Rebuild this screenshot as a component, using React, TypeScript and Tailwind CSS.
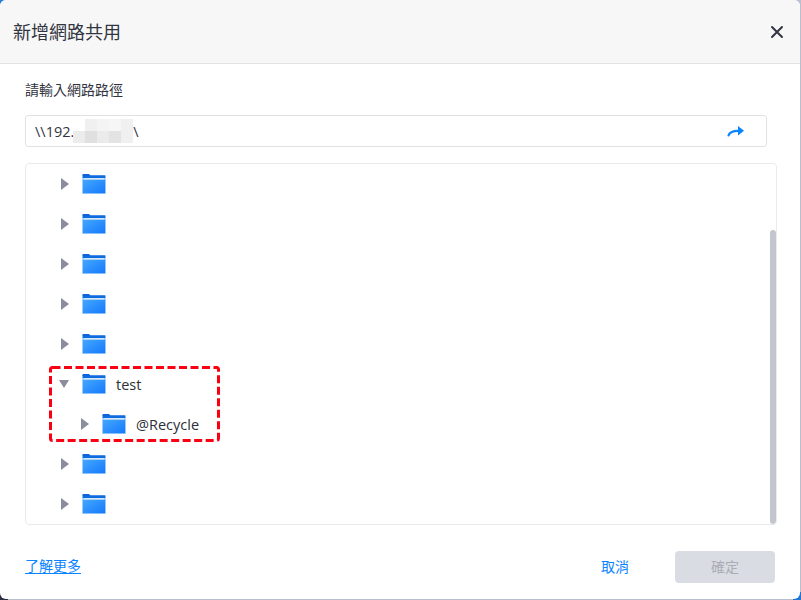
import React from 'react';

const FONT = { fontFamily: '"Open Sans", "Noto Sans CJK TC", sans-serif' };

function Folder() {
  return (
    <svg width="24" height="20" viewBox="0 0 24 20" className="shrink-0">
      <defs>
        <linearGradient id="folderFill" x1="0" y1="0" x2="1" y2="1">
          <stop offset="0" stopColor="#45a8ff" />
          <stop offset="1" stopColor="#1479fb" />
        </linearGradient>
      </defs>
      <path d="M0.5 2V0.8C0.5 0.3 0.8 0 1.2 0H7L8.5 1.5H23V2H0.5Z" fill="#0a63d8" />
      <rect x="0.5" y="1.5" width="23" height="3" fill="#0f6be0" />
      <rect x="0" y="5" width="24" height="15" fill="#b5dafc" />
      <rect x="0.8" y="5.5" width="22.4" height="13.8" fill="url(#folderFill)" />
      <rect x="1.5" y="4" width="21" height="1.5" fill="#d5e8fb" />
    </svg>
  );
}

function Row({ name, open, depth }: { name?: string; open?: boolean; depth?: boolean }) {
  return (
    <div className={`flex h-10 items-center ${depth ? 'pl-[55px]' : 'pl-[35px]'}`}>
      <div className="flex w-[21px] shrink-0 items-center">
        {open ? (
          <div className="h-0 w-0 -translate-x-[2px] border-x-[5.5px] border-t-[8px] border-x-transparent border-t-[#8a8d9c]" />
        ) : (
          <div className="h-0 w-0 border-y-[6px] border-l-[8px] border-y-transparent border-l-[#8a8d9c]" />
        )}
      </div>
      <Folder />
      {name && <span className="ml-[10px] text-[14.5px] leading-[19px] text-[#2c2f38]">{name}</span>}
    </div>
  );
}

const MOSAIC = [
  'bg-white', 'bg-[#f0f0f0]', 'bg-[#f4f4f4]', 'bg-[#f6f6f6]', 'bg-[#f0f0f0]',
  'bg-[#ececec]', 'bg-[#e0e0e0]', 'bg-[#ebebeb]', 'bg-[#e3e3e3]', 'bg-[#f0f0f0]',
];

export default function App() {
  return (
    <div className="relative h-[600px] w-[801px] overflow-hidden bg-[#b8c0cf]" style={FONT}>
      <div className="absolute left-0 top-0 h-2 w-2 bg-[#2f7fd6]" />
      <div className="absolute bottom-0 left-0 h-2 w-2 bg-[#2a3040]" />
      <div className="absolute bottom-0 right-0 h-2 w-2 bg-[#1f74d8]" />
      <div className="relative flex h-[599px] w-[800px] flex-col overflow-hidden rounded-[6px] bg-white">
        <div className="flex h-[64px] shrink-0 items-center justify-between border-b border-[#e1e2e6] bg-[#f7f7f8] pl-[13px] pr-[16px]">
          <h1 className="translate-y-[1px] text-[18px] font-normal text-[#32353f]">新增網路共用</h1>
          <svg width="14" height="14" viewBox="0 0 14 14">
            <path d="M2 2L12 12M12 2L2 12" stroke="#32353f" strokeWidth="2" strokeLinecap="round" />
          </svg>
        </div>

        <div className="flex flex-1 flex-col px-[25px]">
          <label className="mt-[16px] h-[20px] text-[14px] leading-[20px] text-[#32353f]">請輸入網路路徑</label>
          <div className="mr-[8px] mt-[15px] flex h-[32px] shrink-0 items-center justify-between rounded-[3px] border border-[#dfe1e5] pl-[9px] pr-[21px]">
            <div className="flex items-center text-[14.5px] leading-[19px] text-[#32353f]">
              <span>\\192.</span>
              <div className="-ml-[1px] grid h-[24px] w-[60px] grid-cols-5 grid-rows-2">
                {MOSAIC.map((c, i) => (
                  <div key={i} className={c} />
                ))}
              </div>
              <span>\</span>
            </div>
            <svg width="18" height="12" viewBox="0 0 18 12">
              <path d="M1.5 10.5C2.5 7 5.5 5.6 12 5.8" fill="none" stroke="#0a84ff" strokeWidth="2.2" strokeLinecap="round" />
              <path d="M11 1L17 5.8L11 10.5Z" fill="#0a84ff" />
            </svg>
          </div>

          <div className="relative mr-[-2px] mt-[16px] h-[362px] shrink-0 overflow-hidden rounded-[4px] border border-[#e9eaec]">
            <Row />
            <Row />
            <Row />
            <Row />
            <Row />
            <Row name="test" open />
            <Row name="@Recycle" depth />
            <Row />
            <Row />
            <div className="absolute right-0 top-[66px] h-[294px] w-[6px] rounded-[3px] bg-[#c3c6cc]" />
            <svg width="171" height="76" className="absolute left-[23px] top-[202px]">
              <rect x="1.5" y="1.5" width="168" height="73" rx="2" fill="none" stroke="#fa0012" strokeWidth="3" strokeDasharray="8 3.5" />
            </svg>
          </div>

          <div className="flex flex-1 items-center justify-between pt-[10px]">
            <a className="-translate-y-[2px] text-[14px] text-[#0a84ff] underline underline-offset-2">了解更多</a>
            <div className="flex items-center">
              <button className="mr-[46px] -translate-y-[1px] text-[14px] text-[#0a84ff]">取消</button>
              <button className="h-[32px] w-[100px] rounded-[4px] bg-[#d9dde3] pb-[2px] text-[14px] text-[#a9adb3]">確定</button>
            </div>
          </div>
        </div>
      </div>
    </div>
  );
}
